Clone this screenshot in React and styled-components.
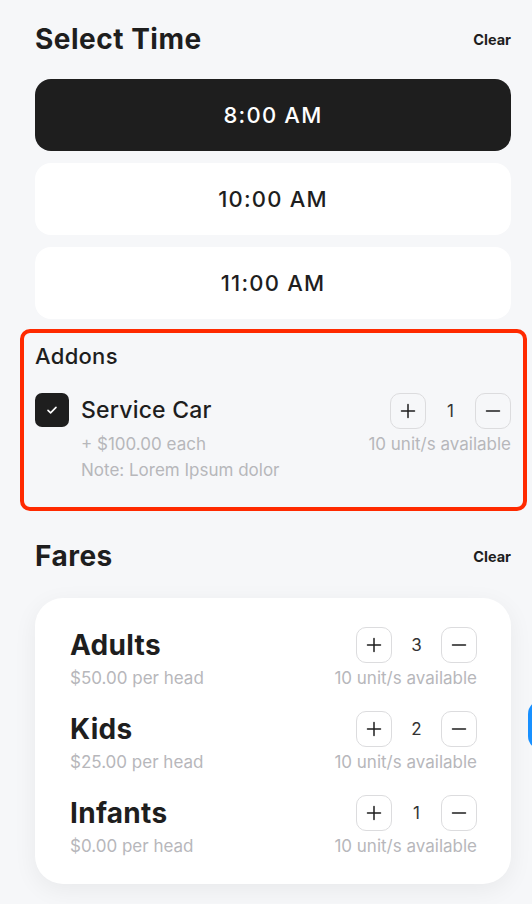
import React from 'react';
import styled, { createGlobalStyle } from 'styled-components';

const GlobalStyle = createGlobalStyle`
  html, body {
    margin: 0;
    padding: 0;
    background: #f6f7f9;
    overflow: hidden;
  }
  body {
    font-family: Inter, "Noto Sans", sans-serif;
    color: #1e1e1e;
  }
`;

const times = ['8:00 AM', '10:00 AM', '11:00 AM'];

const fares = [
  { name: 'Adults', price: '$50.00 per head', qty: 3 },
  { name: 'Kids', price: '$25.00 per head', qty: 2 },
  { name: 'Infants', price: '$0.00 per head', qty: 1 },
];

const PlusIcon = () => (
  <svg width="16" height="16" viewBox="0 0 16 16" fill="none">
    <path d="M8 1.5v13M1.5 8h13" stroke="#1e1e1e" strokeWidth="1.5" strokeLinecap="round" />
  </svg>
);

const MinusIcon = () => (
  <svg width="16" height="16" viewBox="0 0 16 16" fill="none">
    <path d="M1.5 8h13" stroke="#1e1e1e" strokeWidth="1.5" strokeLinecap="round" />
  </svg>
);

const CheckIcon = () => (
  <svg width="12" height="12" viewBox="0 0 12 12" fill="none">
    <path d="M2 6.4l2.6 2.5L10 3.4" stroke="#fff" strokeWidth="1.6" strokeLinecap="round" strokeLinejoin="round" />
  </svg>
);

function Stepper({ value }) {
  return (
    <StepperRow>
      <StepButton><PlusIcon /></StepButton>
      <Count>{value}</Count>
      <StepButton><MinusIcon /></StepButton>
    </StepperRow>
  );
}

export default function App() {
  return (
    <Page>
      <GlobalStyle />

      <SectionHeader>
        <Title>Select Time</Title>
        <ClearLink>Clear</ClearLink>
      </SectionHeader>

      <TimeList>
        {times.map((t, i) => (
          <TimeButton key={t} active={i === 0}>{t}</TimeButton>
        ))}
      </TimeList>

      <AddonsBox>
        <AddonsTitle>Addons</AddonsTitle>
        <AddonRow>
          <Checkbox><CheckIcon /></Checkbox>
          <AddonInfo>
            <AddonName>Service Car</AddonName>
            <Muted>+ $100.00 each</Muted>
            <Muted>Note: Lorem Ipsum dolor</Muted>
          </AddonInfo>
          <RightCol>
            <Stepper value={1} />
            <Muted>10 unit/s available</Muted>
          </RightCol>
        </AddonRow>
      </AddonsBox>

      <SectionHeader spaced>
        <Title>Fares</Title>
        <ClearLink>Clear</ClearLink>
      </SectionHeader>

      <FareCard>
        {fares.map(f => (
          <FareRow key={f.name}>
            <FareInfo>
              <FareName>{f.name}</FareName>
              <Muted>{f.price}</Muted>
            </FareInfo>
            <RightCol>
              <Stepper value={f.qty} />
              <Muted>10 unit/s available</Muted>
            </RightCol>
          </FareRow>
        ))}
      </FareCard>

      <FloatButton />
    </Page>
  );
}

const Page = styled.div`
  position: relative;
  width: 476px;
  height: 883px;
  padding: 21px 21px 0 35px;
`;

const SectionHeader = styled.div`
  display: flex;
  align-items: center;
  justify-content: space-between;
  height: 36px;
  margin-top: ${props => props.spaced ? '27px' : '0'};
`;

const Title = styled.h2`
  margin: 0;
  font-size: 28px;
  font-weight: 700;
  letter-spacing: 0.5px;
  color: #1e1e1e;
`;

const ClearLink = styled.span`
  font-size: 14.5px;
  font-weight: 700;
  color: #1e1e1e;
`;

const TimeList = styled.div`
  display: flex;
  flex-direction: column;
  gap: 12px;
  margin-top: 22px;
`;

const TimeButton = styled.div`
  height: 72px;
  border-radius: 16px;
  display: flex;
  align-items: center;
  justify-content: center;
  font-size: 22px;
  font-weight: 500;
  letter-spacing: 1.2px;
  background: ${props => props.active ? '#1e1e1e' : '#ffffff'};
  color: ${props => props.active ? '#ffffff' : '#1e1e1e'};
`;

const AddonsBox = styled.div`
  margin: 10px -16px 0 -15px;
  border: 4px solid #ff2a00;
  border-radius: 10px;
  padding: 10px 12px 26px 11px;
`;

const AddonsTitle = styled.div`
  font-size: 22px;
  font-weight: 500;
  line-height: 26px;
  letter-spacing: 0.3px;
`;

const AddonRow = styled.div`
  display: flex;
  align-items: flex-start;
  margin-top: 24px;
`;

const Checkbox = styled.div`
  width: 34px;
  height: 34px;
  border-radius: 7px;
  background: #1e1e1e;
  display: flex;
  align-items: center;
  justify-content: center;
  flex-shrink: 0;
`;

const AddonInfo = styled.div`
  flex: 1;
  margin-left: 12px;
  display: flex;
  flex-direction: column;
  gap: 4px;
`;

const AddonName = styled.div`
  font-size: 23px;
  font-weight: 500;
  line-height: 35px;
  letter-spacing: 0.2px;
  margin-bottom: 1px;
`;

const Muted = styled.div`
  font-size: 17px;
  line-height: 22px;
  color: #b7b7bb;
`;

const RightCol = styled.div`
  display: flex;
  flex-direction: column;
  align-items: flex-end;
  gap: 4px;
`;

const StepperRow = styled.div`
  display: flex;
  align-items: center;
`;

const StepButton = styled.div`
  width: 34px;
  height: 34px;
  border: 1px solid #dcdcde;
  border-radius: 10px;
  display: flex;
  align-items: center;
  justify-content: center;
`;

const Count = styled.span`
  width: 49px;
  text-align: center;
  font-size: 17px;
  color: #333;
`;

const FareCard = styled.div`
  margin-top: 24px;
  background: #fff;
  border-radius: 28px;
  box-shadow: 0 6px 24px rgba(0, 0, 0, 0.06);
  padding: 29px 34px 27px 35px;
  display: flex;
  flex-direction: column;
  gap: 22px;
`;

const FareRow = styled.div`
  display: flex;
  justify-content: space-between;
  align-items: flex-start;
`;

const FareInfo = styled.div`
  display: flex;
  flex-direction: column;
  gap: 4px;
`;

const FareName = styled.div`
  font-size: 28px;
  font-weight: 700;
  line-height: 36px;
  letter-spacing: 0.3px;
`;

const FloatButton = styled.div`
  position: absolute;
  left: 528px;
  top: 700px;
  width: 40px;
  height: 50px;
  border-radius: 14px 0 0 14px;
  background: #1890ff;
`;
